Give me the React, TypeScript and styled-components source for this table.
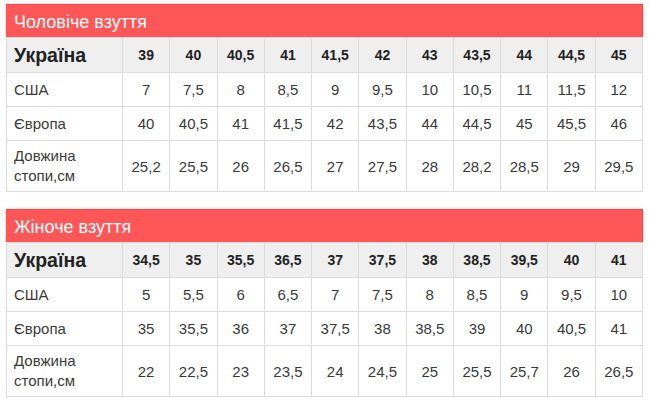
import styled, { createGlobalStyle } from "styled-components"

const GlobalStyle = createGlobalStyle`
  body {
    margin: 0;
    background: #ffffff;
    font-family: "Liberation Sans", Arial, sans-serif;
    color: #333333;
  }
`

const Page = styled.div`
  padding: 4px 6px 0 6px;
  display: flex;
  flex-direction: column;
  gap: 17px;
  width: 637px;
`

const Section = styled.section`
  display: flex;
  flex-direction: column;
`

const Title = styled.div`
  height: 33px;
  line-height: 34px;
  padding-left: 8px;
  background: #ff5757;
  border-top: 1px solid #f04a4a;
  border-right: 1px solid #e04c4c;
  box-sizing: border-box;
  box-shadow: 0 0 3px rgba(255, 80, 80, 0.35);
  color: #ffffff;
  font-size: 18px;
`

const Table = styled.table`
  width: 637px;
  border-collapse: collapse;
  table-layout: fixed;
`

const Row = styled.tr<{ $h: number }>`
  height: ${(p) => p.$h}px;
`

const HeadRow = styled(Row)`
  background: #efefef;
`

const LabelCell = styled.th<{ $big?: boolean }>`
  width: 116px;
  box-sizing: border-box;
  padding: 0 0 0 7px;
  border: 1px solid #dcdcdc;
  text-align: left;
  font-weight: ${(p) => (p.$big ? 700 : 400)};
  font-size: ${(p) => (p.$big ? "19.5px" : "15px")};
  line-height: 20px;
  color: ${(p) => (p.$big ? "#222" : "#3a3a3a")};
`

const Cell = styled.td<{ $bold?: boolean }>`
  border: 1px solid #dcdcdc;
  padding: 0;
  text-align: center;
  font-size: ${(p) => (p.$bold ? "14px" : "15px")};
  font-weight: ${(p) => (p.$bold ? 700 : 400)};
  color: ${(p) => (p.$bold ? "#222" : "#3a3a3a")};
`

type SizeTable = {
  title: string
  ua: string[]
  us: string[]
  eu: string[]
  len: string[]
}

const tables: SizeTable[] = [
  {
    title: "Чоловіче взуття",
    ua: ["39", "40", "40,5", "41", "41,5", "42", "43", "43,5", "44", "44,5", "45"],
    us: ["7", "7,5", "8", "8,5", "9", "9,5", "10", "10,5", "11", "11,5", "12"],
    eu: ["40", "40,5", "41", "41,5", "42", "43,5", "44", "44,5", "45", "45,5", "46"],
    len: ["25,2", "25,5", "26", "26,5", "27", "27,5", "28", "28,2", "28,5", "29", "29,5"],
  },
  {
    title: "Жіноче взуття",
    ua: ["34,5", "35", "35,5", "36,5", "37", "37,5", "38", "38,5", "39,5", "40", "41"],
    us: ["5", "5,5", "6", "6,5", "7", "7,5", "8", "8,5", "9", "9,5", "10"],
    eu: ["35", "35,5", "36", "37", "37,5", "38", "38,5", "39", "40", "40,5", "41"],
    len: ["22", "22,5", "23", "23,5", "24", "24,5", "25", "25,5", "25,7", "26", "26,5"],
  },
]

function SizeBlock({ data }: { data: SizeTable }) {
  return (
    <Section>
      <Title>{data.title}</Title>
      <Table>
        <colgroup>
          <col style={{ width: 116 }} />
          {data.ua.map((_, i) => (
            <col key={i} />
          ))}
        </colgroup>
        <tbody>
          <HeadRow $h={35}>
            <LabelCell $big>Україна</LabelCell>
            {data.ua.map((v, i) => (
              <Cell key={i} $bold>
                {v}
              </Cell>
            ))}
          </HeadRow>
          <Row $h={34}>
            <LabelCell>США</LabelCell>
            {data.us.map((v, i) => (
              <Cell key={i}>{v}</Cell>
            ))}
          </Row>
          <Row $h={34}>
            <LabelCell>Європа</LabelCell>
            {data.eu.map((v, i) => (
              <Cell key={i}>{v}</Cell>
            ))}
          </Row>
          <Row $h={51}>
            <LabelCell>
              Довжина
              <br />
              стопи,см
            </LabelCell>
            {data.len.map((v, i) => (
              <Cell key={i}>{v}</Cell>
            ))}
          </Row>
        </tbody>
      </Table>
    </Section>
  )
}

export default function App() {
  return (
    <>
      <GlobalStyle />
      <Page>
        {tables.map((t) => (
          <SizeBlock key={t.title} data={t} />
        ))}
      </Page>
    </>
  )
}
